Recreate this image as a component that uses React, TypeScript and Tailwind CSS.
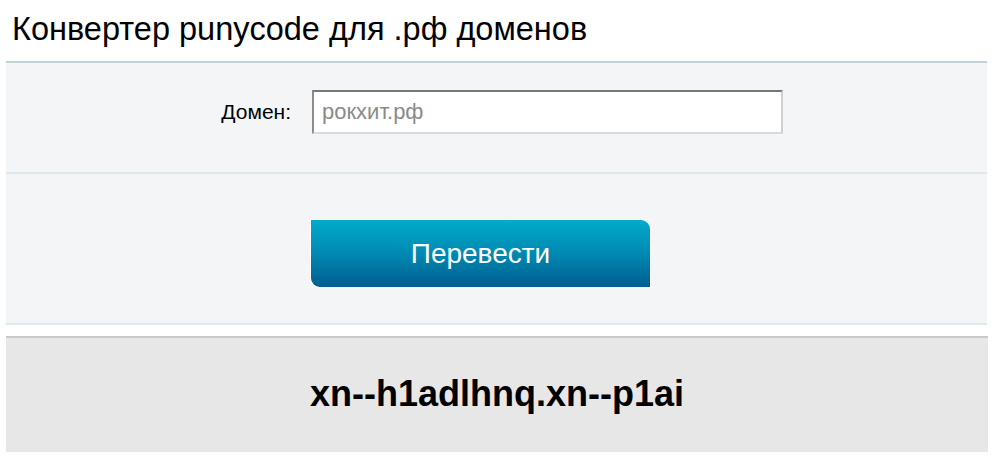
import * as React from "react";

export default function App() {
  const [domain, setDomain] = React.useState("");

  return (
    <div className="min-h-[463px] bg-white font-['Liberation_Sans',Arial,sans-serif] text-black">
      <h1 className="h-[61px] pl-[12px] pt-[9px] text-[32.5px] leading-[40px] font-normal">
        Конвертер punycode для .рф доменов
      </h1>

      <div className="mx-[6px] w-[981px] border-t-2 border-[#c1d5d9] bg-[#f3f5f7]">
        <div className="flex h-[111px] items-center border-b-2 border-[#dfe9eb] pb-[11px]">
          <label className="w-[285px] text-right text-[21px] leading-[24px]">Домен:</label>
          <input
            value={domain}
            onChange={(e) => setDomain(e.target.value)}
            placeholder="рокхит.рф"
            className="ml-[21px] h-[44px] w-[471px] border-2 border-t-[#777777] border-l-[#8c8c8c] border-r-[#cfcfcf] border-b-[#dadada] bg-white px-[8px] text-[22px] text-[#333] outline-none placeholder:text-[#8a8a8a]"
          />
        </div>

        <div className="flex h-[151px] items-start border-b-2 border-[#dfe9eb] pt-[46px]">
          <button
            type="button"
            className="ml-[305px] h-[67px] w-[339px] rounded-tr-[9px] rounded-bl-[9px] bg-gradient-to-b from-[#03abcb] via-[#0189b3] to-[#015e8f] text-[28px] text-white shadow-[0_0_0_1px_#ffffff]"
          >
            Перевести
          </button>
        </div>
      </div>

      <div className="mx-[6px] mt-[11px] flex h-[116px] w-[982px] items-center justify-center border-t-2 border-[#c9c9c9] bg-[#e7e7e7] pb-[2px]">
        <span className="text-[36px] font-bold leading-[40px]">xn--h1adlhnq.xn--p1ai</span>
      </div>
    </div>
  );
}
